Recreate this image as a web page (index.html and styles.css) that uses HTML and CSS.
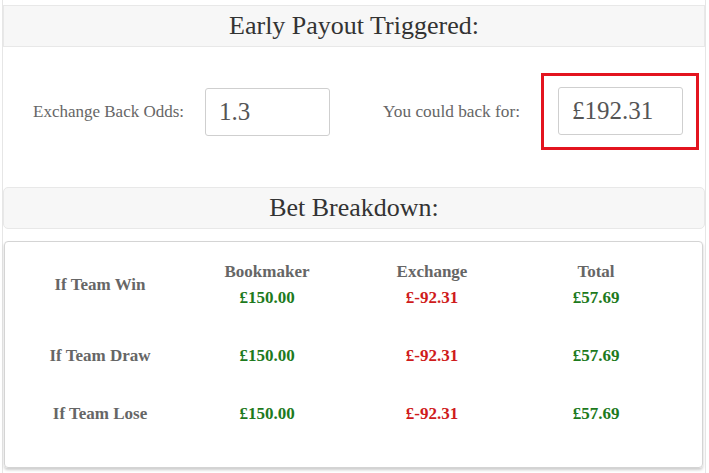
FILE: index.html
```html
<!DOCTYPE html>
<html lang="en">
<head>
  <meta charset="UTF-8" />
  <meta name="viewport" content="width=device-width, initial-scale=1.0"/>
  <title>Early Payout</title>
  <link rel="stylesheet" href="styles.css">
</head>
<body>

  <div class="panel">
    <div class="heading">Early Payout Triggered:</div>

    <div class="odds-row">
      <label class="field-label" for="backOdds">Exchange Back Odds:</label>
      <input class="field" type="text" id="backOdds" value="1.3" />
      <span class="field-label second">You could back for:</span>
      <div class="highlight">
        <input class="field" type="text" id="backFor" value="£192.31" />
      </div>
    </div>

    <div class="heading rounded">Bet Breakdown:</div>

    <div class="card">
      <div class="row">
        <div class="cell label">If Team Win</div>
        <div class="cell"><span class="head">Bookmaker</span><span class="win">£150.00</span></div>
        <div class="cell"><span class="head">Exchange</span><span class="loss">£-92.31</span></div>
        <div class="cell"><span class="head">Total</span><span class="win">£57.69</span></div>
      </div>
      <div class="row">
        <div class="cell label">If Team Draw</div>
        <div class="cell"><span class="win">£150.00</span></div>
        <div class="cell"><span class="loss">£-92.31</span></div>
        <div class="cell"><span class="win">£57.69</span></div>
      </div>
      <div class="row">
        <div class="cell label">If Team Lose</div>
        <div class="cell"><span class="win">£150.00</span></div>
        <div class="cell"><span class="loss">£-92.31</span></div>
        <div class="cell"><span class="win">£57.69</span></div>
      </div>
    </div>
  </div>

</body>
</html>
```

FILE: styles.css
```css
body {
  margin: 0;
  font-family: "Liberation Serif", serif;
  background: #fff;
  color: #333;
}
.panel {
  margin: 0 3px 0 2px;
  padding-top: 5px;
  min-height: 468px;
  border-left: 1px solid #e6e6e6;
  border-right: 1px solid #e6e6e6;
}
.heading {
  height: 40px;
  line-height: 40px;
  background: #f7f7f7;
  border: 1px solid #e8e8e8;
  text-align: center;
  font-size: 26px;
  color: #333;
}
.heading.rounded {
  border-radius: 5px;
}
.odds-row {
  display: flex;
  align-items: center;
  padding: 26px 0 37px 30px;
}
.field-label {
  font-size: 17px;
  color: #666;
  margin-right: 21px;
}
.field-label.second {
  font-size: 17.3px;
  margin-left: 53px;
  margin-right: 21px;
}
.field {
  box-sizing: border-box;
  width: 125px;
  height: 48px;
  padding: 0 13px;
  border: 1px solid #cfcfcf;
  border-radius: 3px;
  font-family: "Liberation Serif", serif;
  font-size: 25px;
  color: #555;
  background: #fff;
}
.highlight {
  border: 3px solid #e3141f;
  padding: 11px 13px 12px 14px;
  display: flex;
}
.card {
  margin: 12px 2px 0 1px;
  padding: 1px 0 24px 12px;
  border: 1px solid #d4d4d4;
  border-radius: 4px;
  box-shadow: 0 2px 3px rgba(0,0,0,0.2);
}
.row {
  display: grid;
  grid-template-columns: 166px 168px 162px 166px;
}
.cell {
  display: flex;
  flex-direction: column;
  justify-content: center;
  align-items: center;
  padding: 16px 0;
  line-height: 26px;
  font-size: 17px;
  font-weight: bold;
}
.label, .head {
  color: #666;
}
.win {
  color: #1d7a1d;
}
.loss {
  color: #cf1b1b;
}
```
